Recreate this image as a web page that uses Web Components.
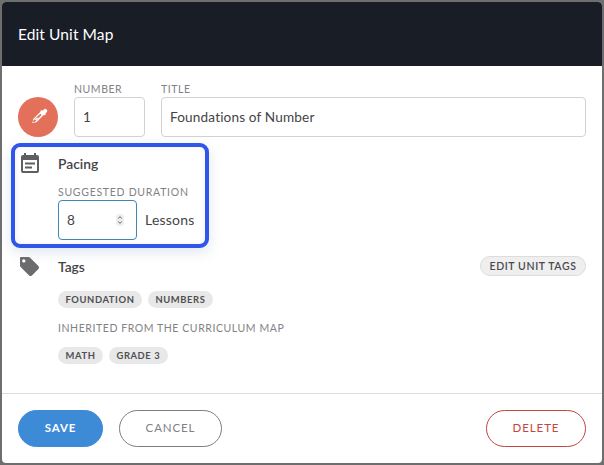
<!DOCTYPE html>
<html><head><meta charset="utf-8">
<style>
html,body{margin:0;padding:0;background:#6e6e6e;width:604px;height:465px;overflow:hidden}
body{padding:2px;box-sizing:border-box;font-family:Lato,"Liberation Sans",sans-serif;color:#444447}
</style></head><body>
<template id="t-dialog"><style>
:host{display:flex;flex-direction:column;width:600px;height:461px;background:#fff;border-radius:4px;overflow:hidden}
header{height:64px;box-sizing:border-box;background:#191d26;color:#fff;display:flex;align-items:center;padding:0 16px;font-size:15.5px;letter-spacing:.1px}
main{flex:1;min-height:0;display:flex;flex-direction:column}
footer{height:70px;box-sizing:border-box;border-top:1px solid #dcdcdc;display:flex;align-items:center;gap:16px;padding:0 16px}
footer ::slotted(:last-child){margin-left:auto}
</style><header><slot name="title"></slot></header><main><slot></slot></main><footer><slot name="actions"></slot></footer></template>

<template id="t-field"><style>
:host{display:flex;flex-direction:column;font-size:10.5px;letter-spacing:.55px;color:#828286;line-height:15px}
.box{box-sizing:border-box;height:40px;border:1px solid #d2d2d2;border-radius:4px;display:flex;align-items:center;padding:0 8px;font-size:13.6px;letter-spacing:.15px;color:#444447;background:#fff}
:host([focus]) .box{border-color:#3f87b5}
</style><span><slot name="label"></slot></span><div class="box" part="box"><slot></slot></div></template>

<template id="t-chip"><style>
:host{display:inline-flex;align-items:center;height:17px;padding:0 7.5px;border-radius:9px;background:#e8e8e8;color:#4f4f52;font-size:9.4px;font-weight:700;letter-spacing:.6px}
</style><slot></slot></template>

<template id="t-btn"><style>
:host{display:inline-flex;align-items:center;justify-content:center;box-sizing:border-box;height:37px;padding-bottom:2px;border-radius:19px;font-size:11.5px;letter-spacing:.9px;border:1px solid #7d7d7d;color:#808084;background:#fff}
:host([kind=save]){background:#3d8bd6;border-color:#3d8bd6;color:#fff;width:85px;font-weight:700}
:host([kind=cancel]){width:103px}
:host([kind=delete]){width:100px;border-color:#c4443f;color:#c4443f}
:host([kind=small]){height:20px;width:106px;padding:0;background:#efefef;border-color:#dcdcdc;color:#4a4a4d;font-size:10.5px;letter-spacing:.6px;border-radius:10px}
</style><slot></slot></template>

<template id="t-section"><style>
:host{display:grid;grid-template-columns:40px 1fr;box-sizing:border-box}
.ic{display:flex;justify-content:flex-start}
.head{display:flex;align-items:center;justify-content:space-between;font-size:13.8px;font-weight:600;color:#444447;height:20px}
</style><div class="ic"><slot name="icon"></slot></div><div><div class="head"><slot name="title"></slot><slot name="action"></slot></div><slot></slot></div></template>

<template id="t-highlight"><style>
:host{display:block;box-sizing:border-box;width:198px;height:105px;margin:6px 0 0 9px;border:4px solid #2f55ea;border-radius:9px;box-shadow:0 4px 14px rgba(80,110,170,.18),inset 0 0 6px rgba(0,0,0,.07);padding:6px 0 0 0;background:#fff}
</style><slot></slot></template>

<template id="t-spinner"><style>
:host{display:inline-flex;flex-direction:column;align-items:center;justify-content:center;width:8px;height:12px;margin-right:4px;border-radius:3px;background:#efefef}
svg{display:block}
</style><svg width="6" height="10" viewBox="0 0 6 10" fill="none" stroke="#666" stroke-width="1"><path d="M1.2 3.6 3 1.6 4.8 3.6M1.2 6.4 3 8.4 4.8 6.4"/></svg></template>

<template id="t-row"><style>
:host{display:flex;align-items:center;gap:6px}
</style><slot></slot></template>

<script>
for (const [tag,id] of [['x-dialog','t-dialog'],['x-field','t-field'],['x-chip','t-chip'],['x-btn','t-btn'],['x-section','t-section'],['x-highlight','t-highlight'],['x-spinner','t-spinner'],['x-row','t-row']]) {
  customElements.define(tag, class extends HTMLElement {
    constructor(){super();this.attachShadow({mode:'open'}).appendChild(document.getElementById(id).content.cloneNode(true));}
  });
}
</script>

<x-dialog>
  <span slot="title">Edit Unit Map</span>

  <x-row style="gap:16px;padding:16px 16px 0 16px;align-items:flex-end">
    <svg width="40" height="40" viewBox="0 0 40 40" style="flex:none"><circle cx="20" cy="20" r="20" fill="#e2705a"/><path fill="#fff" d="M24.300 13.300l.5.5 1-1.300a1.900 1.900 0 0 1 2.900 2.700l-1.300 1.200.6.600-1.400 1.400-.7-.7-6.900 7a2.400 2.400 0 0 1-1.700.7l-1.300.2-.8.700-1.100-1.100.7-.8.200-1.300c0-.6.300-1.200.7-1.700l7-6.900-.7-.7zM22.300 16.700l-6.700 6.600c-.3.300-.4.600-.4 1l-.1.900.9-.1c.4 0 .7-.1 1-.4l6.600-6.700z"/><path fill="#fff" d="M15.800 22.900l3-.1 2-2-2.100.1z"/></svg>
    <x-field style="width:71px"><span slot="label">NUMBER</span>1</x-field>
    <x-field style="flex:1"><span slot="label">TITLE</span>Foundations of Number</x-field>
  </x-row>

  <x-highlight>
    <x-section style="grid-template-columns:43px 1fr">
      <svg slot="icon" width="18" height="20" viewBox="0 0 18 20" style="margin-left:6px"><path fill="#5f5f62" d="M3 0h2v2h8V0h2v2h1a2 2 0 0 1 2 2v14a2 2 0 0 1-2 2H2a2 2 0 0 1-2-2V4a2 2 0 0 1 2-2h1zM2 7v11h14V7z"/><path fill="#5f5f62" d="M4 9.500h10v2H4zM4 13.500h7v2H4z"/></svg>
      <span slot="title">Pacing</span>
      <x-row style="gap:8px;align-items:flex-end;margin-top:12px">
        <x-field focus style="width:79px;white-space:nowrap;letter-spacing:.72px"><span slot="label">SUGGESTED DURATION</span><span style="flex:1">8</span><x-spinner></x-spinner></x-field>
        <span style="font-size:14px;line-height:40px;letter-spacing:.2px">Lessons</span>
      </x-row>
    </x-section>
  </x-highlight>

  <x-section style="padding:8px 16px 0 16px">
    <svg slot="icon" width="21" height="21" viewBox="0 0 21 21" style="margin:0 0 0 1px"><path fill="#6c6c6f" d="M2 1h7.500c.5 0 1 .2 1.400.6l8.500 8.500c.8.8.8 2 0 2.800l-6.500 6.500c-.8.8-2 .8-2.800 0L1.600 10.900C1.200 10.500 1 10 1 9.500V2c0-.6.400-1 1-1zm2.800 2.200a1.700 1.700 0 1 0 0 3.400 1.700 1.700 0 0 0 0-3.400z"/></svg>
    <span slot="title">Tags</span>
    <x-btn slot="action" kind="small">EDIT UNIT TAGS</x-btn>
    <x-row style="margin-top:15px"><x-chip>FOUNDATION</x-chip><x-chip>NUMBERS</x-chip></x-row>
    <div style="font-size:10.5px;letter-spacing:.57px;color:#828286;line-height:14px;margin:13px 0 12px">INHERITED FROM THE CURRICULUM MAP</div>
    <x-row><x-chip>MATH</x-chip><x-chip>GRADE 3</x-chip></x-row>
  </x-section>

  <x-btn slot="actions" kind="save">SAVE</x-btn>
  <x-btn slot="actions" kind="cancel">CANCEL</x-btn>
  <x-btn slot="actions" kind="delete">DELETE</x-btn>
</x-dialog>
</body></html>
